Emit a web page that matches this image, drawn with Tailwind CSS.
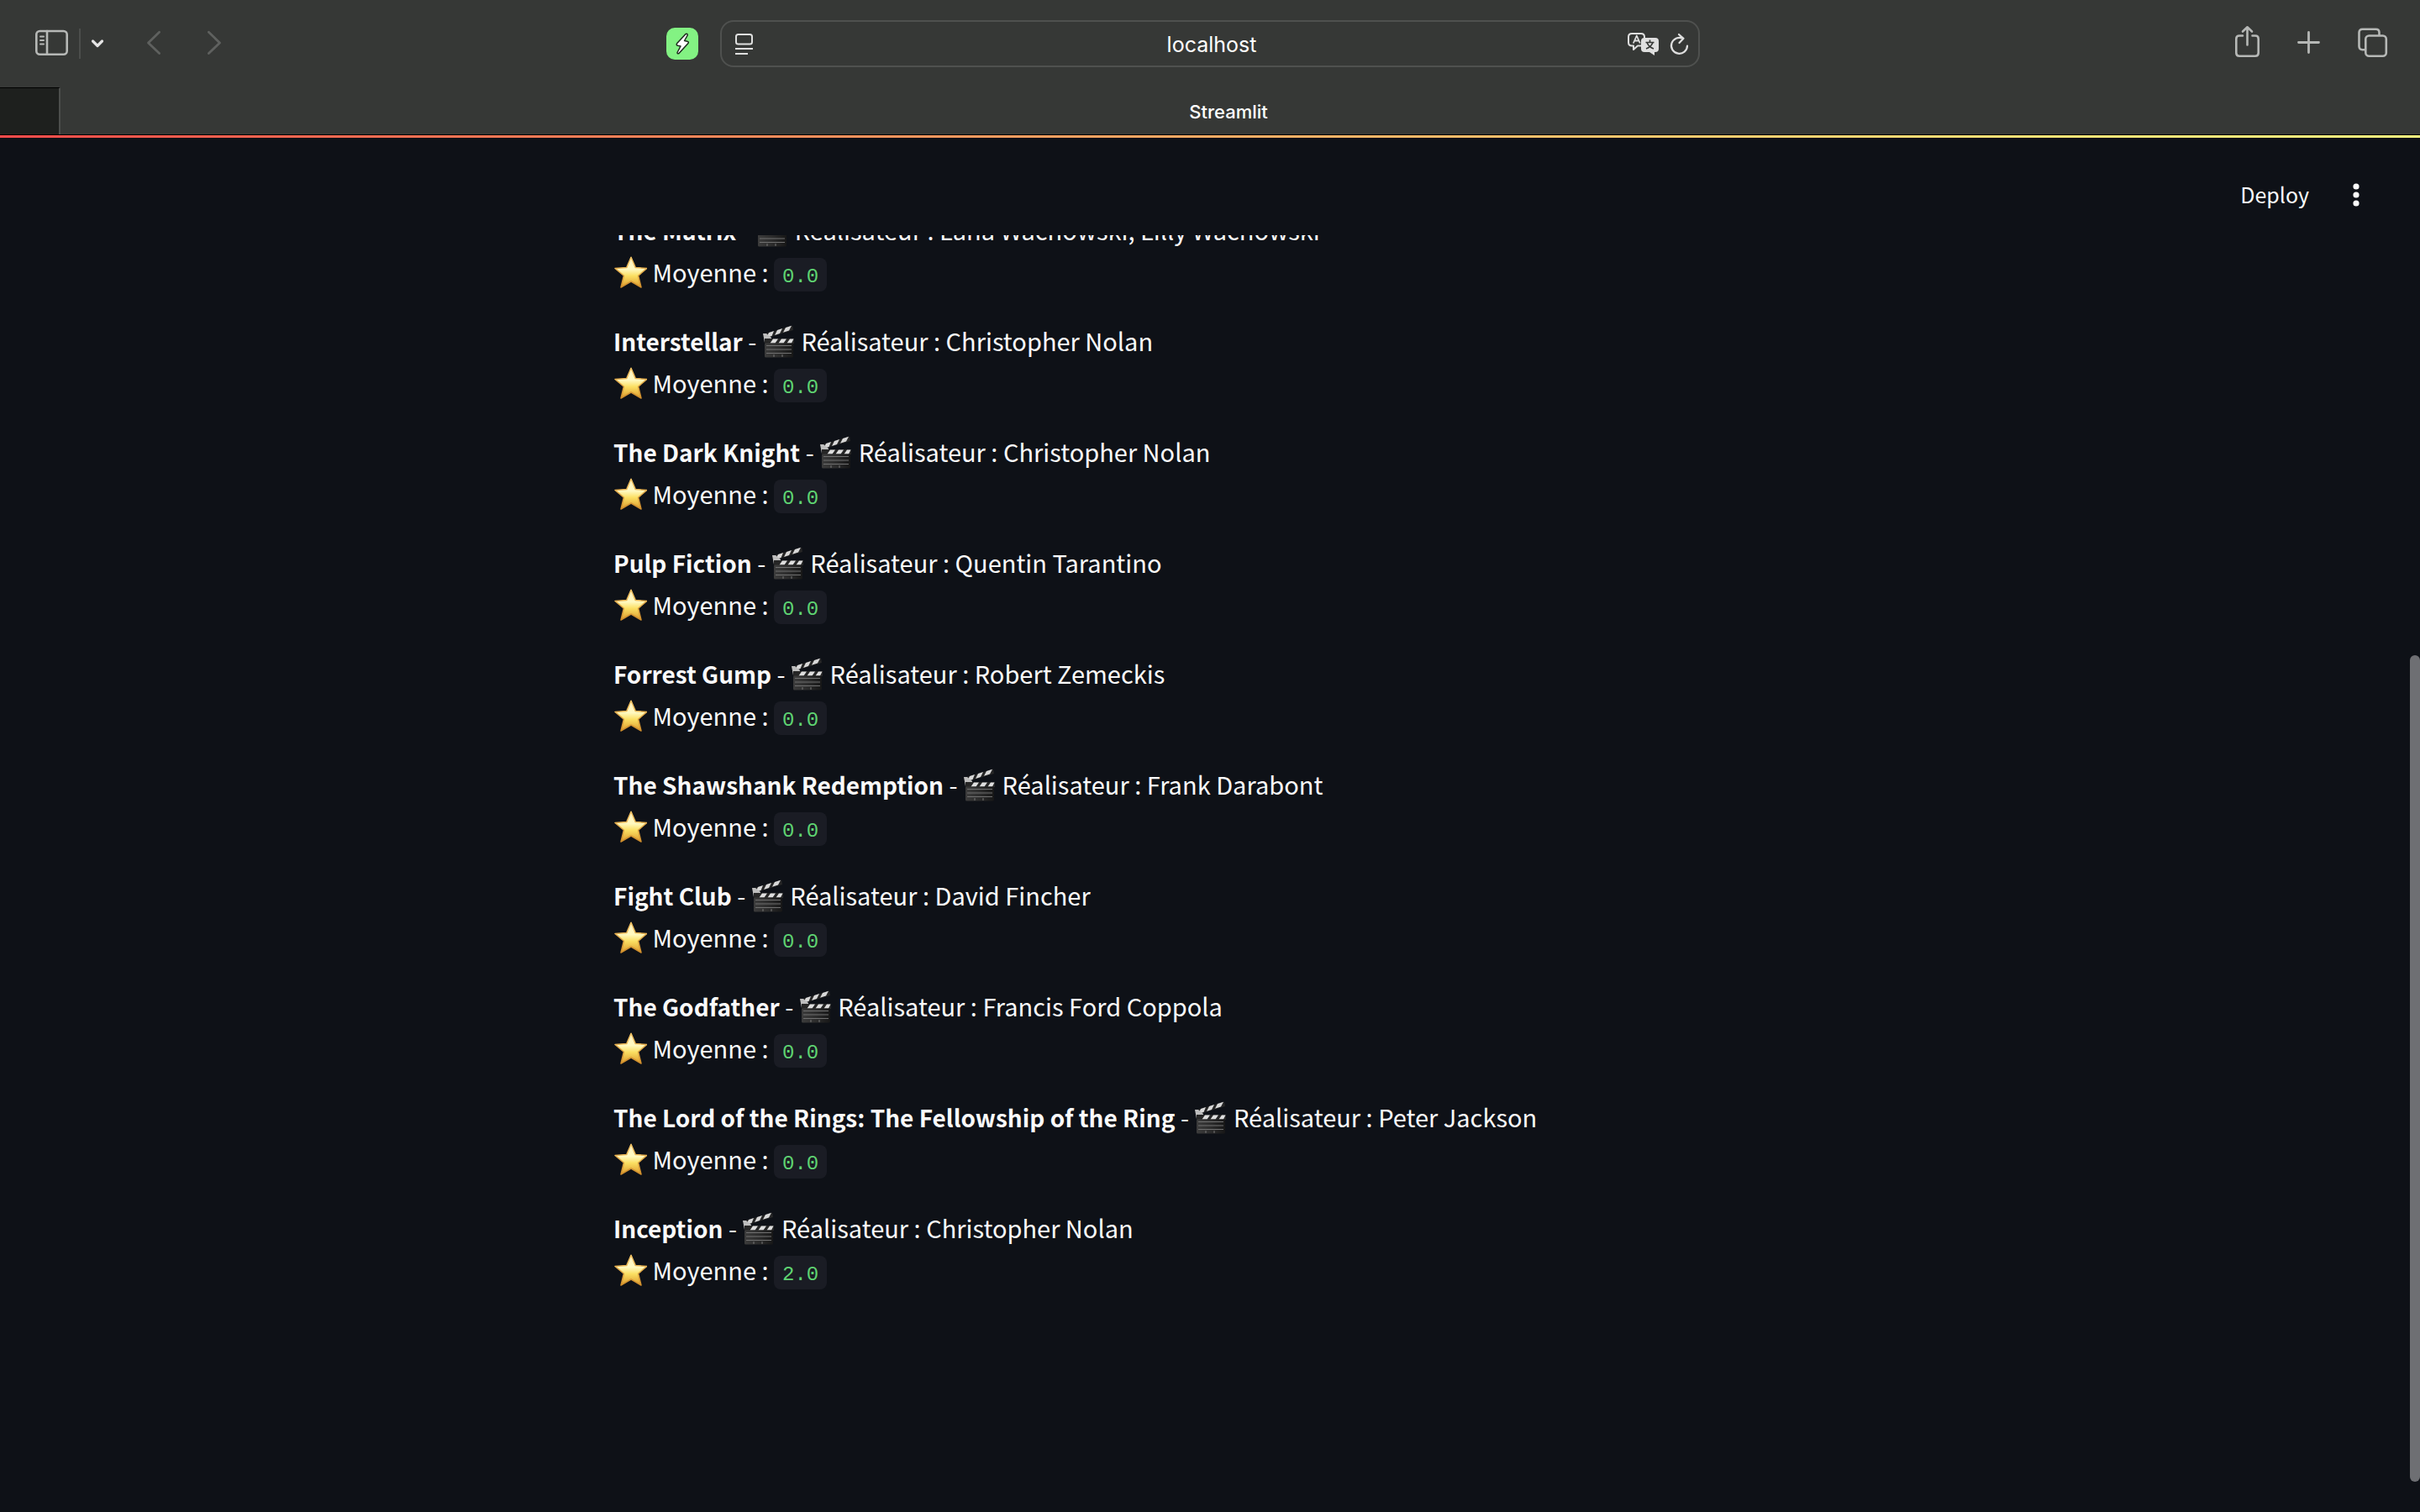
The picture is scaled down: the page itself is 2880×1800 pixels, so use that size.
<!DOCTYPE html>
<html lang="fr">
<head>
<meta charset="utf-8">
<title>Streamlit</title>
<script src="https://cdn.jsdelivr.net/npm/@tailwindcss/browser@4"></script>
</head>
<body class="flex h-screen flex-col overflow-hidden bg-[#0e1117] font-['Noto_Sans_CJK_SC',sans-serif] text-[#fafafa]">

<!-- Shared emoji artwork -->
<svg class="absolute size-0" aria-hidden="true">
  <defs>
    <linearGradient id="gold" x1="0" y1="0" x2="0" y2="1">
      <stop offset="0" stop-color="#fff3c4"/><stop offset=".4" stop-color="#fff9c0"/><stop offset=".62" stop-color="#fbdf62"/><stop offset="1" stop-color="#dc9a2c"/>
    </linearGradient>
    <linearGradient id="goldEdge" x1="0" y1="0" x2="0" y2="1">
      <stop offset="0" stop-color="#f3c566"/><stop offset="1" stop-color="#cf8d2b"/>
    </linearGradient>
    <linearGradient id="slate" x1="0" y1="0" x2="1" y2="0">
      <stop offset="0" stop-color="#3c3c3c"/><stop offset=".5" stop-color="#2c2c2c"/><stop offset="1" stop-color="#171717"/>
    </linearGradient>
    <symbol id="star" viewBox="0 0 40 40">
      <path d="M21 2.2 26.3 14.6 39.8 15.4 29.6 24.2 33 38 21 31 9 38 12.4 24.2 2 15.4 15.7 14.6Z" fill="url(#gold)" stroke="url(#goldEdge)" stroke-width="1.5" stroke-linejoin="round"/>
    </symbol>
    <symbol id="clap" viewBox="0 0 40 40">
      <path d="M1 12 36 1.500 37 7 3 17Z" fill="#262626"/>
      <path d="M8 10 14 8 11.500 14 5 16ZM18 7 24 5 21 11 15 13ZM28 4 35 1.800 32 7.500 25 9.800Z" fill="#d8d8d8"/>
      <path d="M1 11 5 11 11 16 11 22 3 22Z" fill="#bdbdbd"/>
      <path d="M3 17 38 17 38 23 3 23Z" fill="#262626"/>
      <path d="M13 17.500H19L15.500 22.500H9.500ZM23 17.500H29L25.500 22.500H19.500ZM33 17.500H37.500L35 22.500H29.500Z" fill="#dedede"/>
      <rect x="3" y="22.500" width="34" height="17" rx="1.500" fill="url(#slate)"/>
      <path d="M5 25.500H35M5 30H35M5 34.500H35" stroke="#707070" stroke-width="1.200"/>
      <path d="M14 36V39M24 36V39" stroke="#777" stroke-width="1"/>
    </symbol>
  </defs>
</svg>

<!-- Browser toolbar -->
<header class="shrink-0 border-b border-black bg-[#363836] font-[Inter,sans-serif]">
  <div class="grid h-[104px] grid-cols-[1fr_1166px_1fr] items-center">
    <div class="flex items-center pl-10">
      <button aria-label="Barre latérale" class="shrink-0">
        <svg class="block h-10 w-11" viewBox="0 0 44 40" fill="none" stroke="#b6b8b6" stroke-width="2.600" stroke-linecap="round">
          <rect x="3.300" y="5" width="36.400" height="27.700" rx="4"/><path d="M16 5V32.500"/><path d="M8 11.500H12M8 16H12M8 20.500H12" stroke-width="2"/>
        </svg>
      </button>
      <span class="ml-[10px] h-9 w-0.5 bg-[#4c4e4c]"></span>
      <button aria-label="Groupes d’onglets" class="ml-2">
        <svg class="block h-10 w-6" viewBox="0 0 24 40" fill="none" stroke="#e4e4e4" stroke-width="3.200" stroke-linecap="round" stroke-linejoin="round"><path d="M6.500 17 12 22.500 17.500 17"/></svg>
      </button>
      <button aria-label="Précédent" class="ml-[43px]">
        <svg class="block h-10 w-6" viewBox="0 0 24 40" fill="none" stroke="#5f615f" stroke-width="2.800" stroke-linecap="round" stroke-linejoin="round"><path d="M18.600 6.300 5.500 19 18.600 31.600"/></svg>
      </button>
      <button aria-label="Suivant" class="ml-12">
        <svg class="block h-10 w-6" viewBox="0 0 24 40" fill="none" stroke="#5f615f" stroke-width="2.800" stroke-linecap="round" stroke-linejoin="round"><path d="M5.400 6.300 18.500 19 5.400 31.600"/></svg>
      </button>
      <button aria-label="Extension" class="mr-[26px] ml-auto flex size-[38px] items-center justify-center rounded-[10px] bg-[#83f283]">
        <svg class="block size-[38px]" viewBox="0 0 38 38"><path d="M23 7.500 12.800 18.500Q11.300 20.500 13.500 21.300L17 22 13 29.500Q13 31.500 15 30.500L26 18.500Q27 16.500 25 16.200L21.500 15.500 25.200 9Q25.300 6.500 23 7.500Z" fill="#fff" stroke="#1d2b1d" stroke-width="1.500" stroke-linejoin="round"/></svg>
      </button>
    </div>

    <form class="flex h-14 items-center rounded-2xl border-2 border-[#4f514f] pr-1 pl-3">
      <button type="button" aria-label="Lecteur" class="mr-[58px]">
        <svg class="block h-10 w-8" viewBox="0 0 32 40" fill="none" stroke="#dfdfdf" stroke-width="2"><rect x="5" y="9" width="19" height="11.500" rx="2.500"/><path d="M4 26H25M4 32H19"/></svg>
      </button>
      <input aria-label="Adresse" value="localhost" class="min-w-0 flex-1 bg-transparent pt-0.5 text-center text-[25px] leading-9 text-white outline-none">
      <button type="button" aria-label="Traduire" class="ml-3">
        <svg class="block h-10 w-11" viewBox="0 0 44 40" fill="none" stroke="#dfdfdf" stroke-width="2" stroke-linejoin="round">
          <path d="M18 22.500H14L9 27V22.500H7Q3 22.500 3 18.500V12Q3 8 7 8H18Q22 8 22 12V13"/>
          <path d="M8.800 19.500 12.800 10.500 16.800 19.500M10.300 16.500H15.300" stroke-width="1.800"/>
          <path d="M22 13H35Q39 13 39 17V26Q39 30 35 30H34V34L28 30H22Q18 30 18 26V17Q18 13 22 13Z" fill="#dfdfdf" stroke="none"/>
          <path d="M28.500 15.500V18.500M23.500 18.500H33.500M25 18.500Q27 24 33 26M32 18.500Q30 24 24 26" stroke="#363836" stroke-width="1.700"/>
        </svg>
      </button>
      <button type="button" aria-label="Actualiser" class="ml-1.5">
        <svg class="block h-10 w-8" viewBox="0 0 32 40" fill="none" stroke="#dfdfdf" stroke-width="2.200" stroke-linecap="round" stroke-linejoin="round"><path d="M23 22.500A9.500 9.500 0 1 1 17.500 13.700M13 9 18.500 13.800 13.500 19"/></svg>
      </button>
    </form>

    <div class="flex items-center justify-end gap-[35px] pr-9">
      <button aria-label="Partager">
        <svg class="block h-11 w-10" viewBox="0 0 40 44" fill="none" stroke="#b6b8b6" stroke-width="2.600" stroke-linecap="round" stroke-linejoin="round"><path d="M15 12.500H11Q7.300 12.500 7.300 16.200V33Q7.300 36.700 11 36.700H30Q33.700 36.700 33.700 33V16.200Q33.700 12.500 30 12.500H26.500M20.500 23.500V3M15 7.500 20.500 2.300 26 7.500"/></svg>
      </button>
      <button aria-label="Nouvel onglet">
        <svg class="block h-11 w-10" viewBox="0 0 40 44" fill="none" stroke="#b6b8b6" stroke-width="2.800" stroke-linecap="round"><path d="M6.500 20.500H30.500M18.500 8.500V32.500"/></svg>
      </button>
      <button aria-label="Vue des onglets">
        <svg class="block h-11 w-10" viewBox="0 0 40 44" fill="none" stroke="#b6b8b6" stroke-width="2.600" stroke-linecap="round"><rect x="11.300" y="12.500" width="24.500" height="24.200" rx="4"/><path d="M10.500 29.200H7.500Q3.500 29.200 3.500 25V8.800Q3.500 4.800 7.500 4.800H23.500Q27.500 4.800 27.500 8.800V11"/></svg>
      </button>
    </div>
  </div>
  <div class="flex h-14">
    <div class="w-[72px] border-t border-r-2 border-t-black border-r-[#4c4e4c] bg-[#1e201e]"></div>
    <a href="#" class="flex flex-1 items-center justify-center pt-0.5 pr-7 text-[22px] font-medium text-white">Streamlit</a>
  </div>
</header>

<div class="h-[3px] shrink-0 bg-linear-to-r from-[#ff4b4b] to-[#fffd80]"></div>

<!-- Application header -->
<div class="flex h-[116px] shrink-0 items-center justify-end gap-9 pt-5 pr-[56px]">
  <button class="pb-0.5 text-[25px] leading-9">Deploy</button>
  <button aria-label="Menu"><svg class="block h-10 w-10" viewBox="0 0 40 40" fill="#fafafa"><circle cx="20" cy="10" r="3.600"/><circle cx="20" cy="20" r="3.600"/><circle cx="20" cy="30" r="3.600"/></svg></button>
</div>

<!-- Scrolled content -->
<main class="flex min-h-0 flex-1 overflow-hidden">
  <div class="min-w-0 flex-1">
    <ul class="mx-auto -mt-8 flex max-w-[1408px] flex-col gap-8 text-[29px] leading-[50px] [&_code]:inline-block [&_code]:h-10 [&_code]:rounded-lg [&_code]:bg-[#1a1c24] [&_code]:px-[10px] [&_code]:font-['Liberation_Mono',monospace] [&_code]:text-2xl [&_code]:leading-[46px] [&_code]:text-[#5fd472] [&_p]:h-[50px] [&_strong]:text-[28px] [&_svg]:inline-block [&_svg]:size-10 [&_svg]:align-[-8px]">
      <li><p><strong>The Matrix</strong> - <svg><use href="#clap"/></svg> Réalisateur : Lana Wachowski, Lilly Wachowski</p><p><svg><use href="#star"/></svg> Moyenne : <code>0.0</code></p></li>
      <li><p><strong>Interstellar</strong> - <svg><use href="#clap"/></svg> Réalisateur : Christopher Nolan</p><p><svg><use href="#star"/></svg> Moyenne : <code>0.0</code></p></li>
      <li><p><strong>The Dark Knight</strong> - <svg><use href="#clap"/></svg> Réalisateur : Christopher Nolan</p><p><svg><use href="#star"/></svg> Moyenne : <code>0.0</code></p></li>
      <li><p><strong>Pulp Fiction</strong> - <svg><use href="#clap"/></svg> Réalisateur : Quentin Tarantino</p><p><svg><use href="#star"/></svg> Moyenne : <code>0.0</code></p></li>
      <li><p><strong>Forrest Gump</strong> - <svg><use href="#clap"/></svg> Réalisateur : Robert Zemeckis</p><p><svg><use href="#star"/></svg> Moyenne : <code>0.0</code></p></li>
      <li><p><strong>The Shawshank Redemption</strong> - <svg><use href="#clap"/></svg> Réalisateur : Frank Darabont</p><p><svg><use href="#star"/></svg> Moyenne : <code>0.0</code></p></li>
      <li><p><strong>Fight Club</strong> - <svg><use href="#clap"/></svg> Réalisateur : David Fincher</p><p><svg><use href="#star"/></svg> Moyenne : <code>0.0</code></p></li>
      <li><p><strong>The Godfather</strong> - <svg><use href="#clap"/></svg> Réalisateur : Francis Ford Coppola</p><p><svg><use href="#star"/></svg> Moyenne : <code>0.0</code></p></li>
      <li><p><strong>The Lord of the Rings: The Fellowship of the Ring</strong> - <svg><use href="#clap"/></svg> Réalisateur : Peter Jackson</p><p><svg><use href="#star"/></svg> Moyenne : <code>0.0</code></p></li>
      <li><p><strong>Inception</strong> - <svg><use href="#clap"/></svg> Réalisateur : Christopher Nolan</p><p><svg><use href="#star"/></svg> Moyenne : <code>2.0</code></p></li>
    </ul>
  </div>
  <div class="flex w-3 flex-col pt-[500px] pb-9"><div class="flex-1 rounded-full bg-[#6e6f73]"></div></div>
</main>
</body>
</html>
